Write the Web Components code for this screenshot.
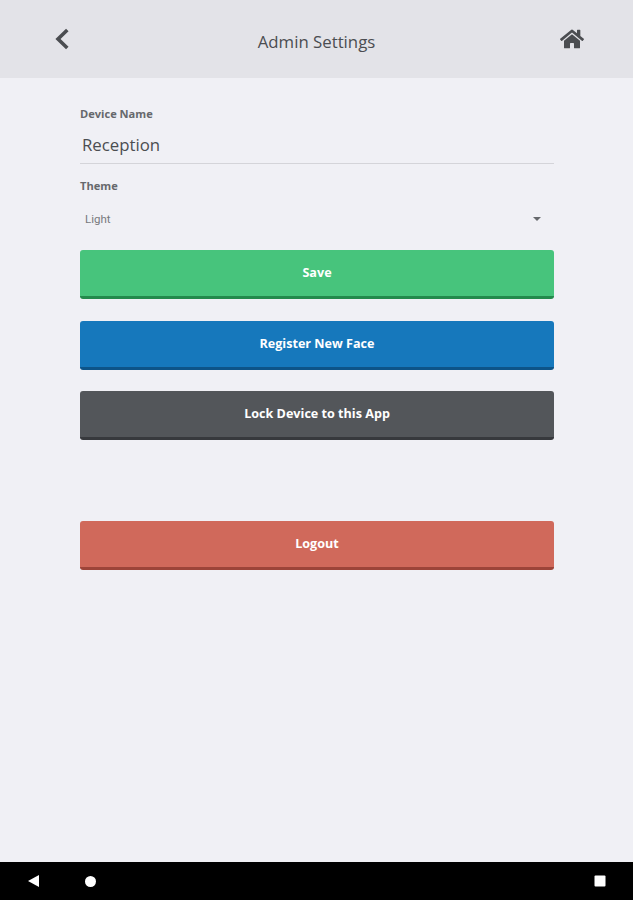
<!DOCTYPE html>
<html lang="en">
<head>
<meta charset="utf-8">
<title>Admin Settings</title>
<style>
  html, body { height: 100%; }
  body {
    margin: 0;
    background: #f0f0f5;
    color: #4b4d51;
    font-family: "Open Sans", sans-serif;
  }
</style>
</head>
<body>
<admin-screen>
  <app-header slot="header">Admin Settings</app-header>
  <text-field label="Device Name">Reception</text-field>
  <select-field label="Theme">Light</select-field>
  <action-button kind="save">Save</action-button>
  <action-button kind="register">Register New Face</action-button>
  <action-button kind="lock">Lock Device to this App</action-button>
  <action-button kind="logout">Logout</action-button>
  <android-nav slot="nav"></android-nav>
</admin-screen>

<script>
function define(name, html) {
  const template = document.createElement('template');
  template.innerHTML = html;
  customElements.define(name, class extends HTMLElement {
    constructor() {
      super();
      this.attachShadow({ mode: 'open' }).appendChild(template.content.cloneNode(true));
    }

    connectedCallback() {
      const label = this.shadowRoot.querySelector('.label');
      if (label) label.textContent = this.getAttribute('label');
    }
  });
}

define('admin-screen', `
  <style>
    :host {
      display: flex;
      flex-direction: column;
      height: 100vh;
    }
    main {
      flex: 1;
      display: flex;
      flex-direction: column;
      padding: 28px 79px 0 80px;
    }
  </style>
  <slot name="header"></slot>
  <main><slot></slot></main>
  <slot name="nav"></slot>
`);

define('app-header', `
  <style>
    :host {
      display: grid;
      grid-template-columns: 80px 1fr 80px;
      align-items: center;
      box-sizing: border-box;
      height: 78px;
      flex: none;
      background: #e3e3e8;
    }
    h1 {
      margin: 0;
      padding-top: 5px;
      text-align: center;
      font-size: 16.8px;
      line-height: 24px;
      font-weight: 400;
    }
    svg { display: block; }
    .back { margin-left: 55px; }
    .home { margin-left: 7px; }
  </style>
  <svg class="back" width="15" height="22" viewBox="0 0 15 22">
    <path d="M12.3 2 L3 11 L12.3 20" fill="none" stroke="#4b4d51" stroke-width="3.6"/>
  </svg>
  <h1><slot></slot></h1>
  <svg class="home" width="24" height="22" viewBox="0 0 576 512">
    <path fill="#4b4d51" d="M280.37 148.26L96 300.11V464a16 16 0 0 0 16 16l112.06-.29a16 16 0 0 0 15.92-16V368a16 16 0 0 1 16-16h64a16 16 0 0 1 16 16v95.64a16 16 0 0 0 16 16.05L464 480a16 16 0 0 0 16-16V300L295.67 148.26a12.19 12.19 0 0 0-15.3 0zM571.6 251.47L488 182.56V44.05a12 12 0 0 0-12-12h-56a12 12 0 0 0-12 12v72.61L318.47 43a48 48 0 0 0-61 0L4.34 251.47a12 12 0 0 0-1.6 16.9l25.5 31A12 12 0 0 0 45.15 301l235.22-193.74a12.19 12.19 0 0 1 15.3 0L530.9 301a12 12 0 0 0 16.9-1.6l25.5-31a12 12 0 0 0-1.7-16.93z"/>
  </svg>
`);

define('text-field', `
  <style>
    :host { display: block; }
    .label {
      font-size: 11.1px;
      line-height: 16px;
      font-weight: 700;
      color: #66686c;
    }
    .value {
      box-sizing: border-box;
      height: 42px;
      padding: 11px 2px 0;
      border-bottom: 1px solid #d4d4d9;
      font-size: 16.8px;
      line-height: 24px;
    }
  </style>
  <div class="label"></div>
  <div class="value"><slot></slot></div>
`);

define('select-field', `
  <style>
    :host {
      display: block;
      margin: 14px 0 23px;
    }
    .label {
      font-size: 11.1px;
      line-height: 16px;
      font-weight: 700;
      color: #66686c;
    }
    .value {
      display: flex;
      align-items: center;
      justify-content: space-between;
      height: 16px;
      margin-top: 17px;
      padding: 0 13px 0 5px;
      font: 11.5px/16px Roboto, sans-serif;
      color: #77797d;
    }
    .arrow {
      border: 4px solid transparent;
      border-top-color: #66686c;
      border-bottom: 0;
    }
  </style>
  <div class="label"></div>
  <div class="value"><slot></slot><span class="arrow"></span></div>
`);

define('action-button', `
  <style>
    :host {
      display: block;
      margin-bottom: 21.5px;
    }
    :host([kind="save"]) { --face: #47c47c; --edge: #238a4c; }
    :host([kind="register"]) { --face: #1678bc; --edge: #0d5488; }
    :host([kind="lock"]) { --face: #53565a; --edge: #37393d; }
    :host([kind="logout"]) { --face: #d0695b; --edge: #9c4439; margin-top: 59.5px; }
    button {
      display: block;
      width: 100%;
      height: 49px;
      padding: 0;
      border: 0;
      border-bottom: 3px solid var(--edge);
      border-radius: 3px;
      background: var(--face);
      color: #fff;
      font: 700 12.6px/16px "Open Sans", sans-serif;
    }
  </style>
  <button type="button"><slot></slot></button>
`);

define('android-nav', `
  <style>
    :host {
      display: flex;
      align-items: center;
      justify-content: space-between;
      flex: none;
      box-sizing: border-box;
      height: 38px;
      padding: 0 27px 0 28px;
      background: #000;
    }
    div { display: flex; align-items: center; gap: 45px; }
    svg { display: block; fill: #fff; }
  </style>
  <div>
    <svg width="12" height="12" viewBox="0 0 12 12"><path d="M0 6 L11 0 V12 Z"/></svg>
    <svg width="11" height="11" viewBox="0 0 11 11"><circle cx="5.5" cy="5.5" r="5.5"/></svg>
  </div>
  <svg width="12" height="12" viewBox="0 0 12 12"><rect x=".5" y=".5" width="11" height="11" rx="1"/></svg>
`);
</script>
</body>
</html>
